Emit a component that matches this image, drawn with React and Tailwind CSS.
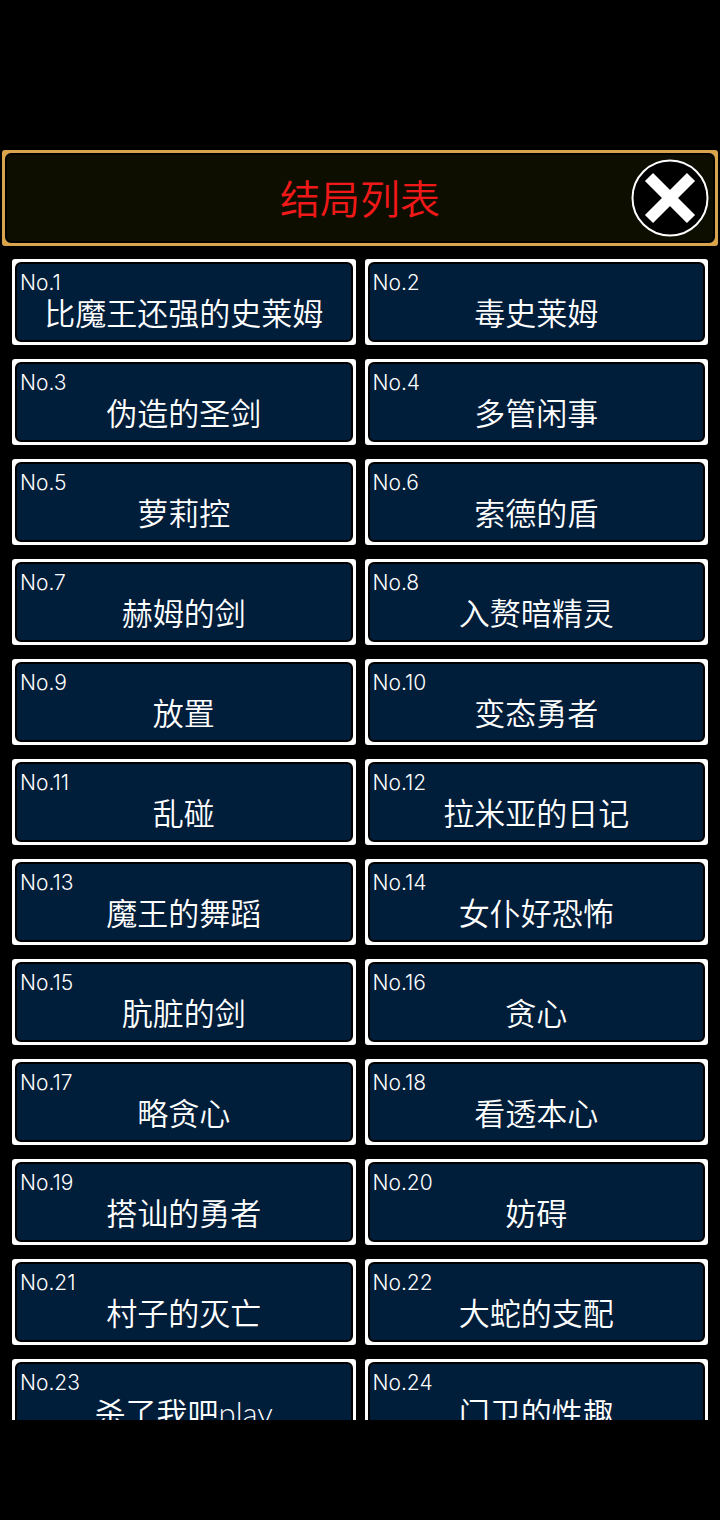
const ENDINGS = [
  "比魔王还强的史莱姆",
  "毒史莱姆",
  "伪造的圣剑",
  "多管闲事",
  "萝莉控",
  "索德的盾",
  "赫姆的剑",
  "入赘暗精灵",
  "放置",
  "变态勇者",
  "乱碰",
  "拉米亚的日记",
  "魔王的舞蹈",
  "女仆好恐怖",
  "肮脏的剑",
  "贪心",
  "略贪心",
  "看透本心",
  "搭讪的勇者",
  "妨碍",
  "村子的灭亡",
  "大蛇的支配",
  "杀了我吧play",
  "门卫的性趣",
];

function CloseIcon() {
  return (
    <svg className="h-full w-full" viewBox="0 0 78 78" fill="none" aria-hidden="true">
      <circle cx="39" cy="39" r="37.5" fill="#000" stroke="#fff" strokeWidth="2" />
      <path d="M18 18L60 60M60 18L18 60" stroke="#fff" strokeWidth="11.5" />
    </svg>
  );
}

function EndingCard({ number, title }) {
  return (
    <button type="button" className="block h-[86px] w-full cursor-pointer rounded-[3px] bg-white p-[3px]">
      <span className="flex h-full flex-col rounded-md border-2 border-black bg-[#001d3a] px-[3px]">
        <span className="pt-[3px] text-left font-['Inter',sans-serif] text-[21px] leading-8 font-light">No.{number}</span>
        <span className="text-center text-[31px] leading-7 whitespace-nowrap">{title}</span>
      </span>
    </button>
  );
}

export default function App() {
  return (
    <div className="flex h-screen flex-col bg-black pt-[150px] pb-[100px] font-['Lato','Noto_Sans_CJK_SC',sans-serif] font-[350] text-white">
      <header className="mx-0.5 h-24 shrink-0 rounded-[3px] bg-[#d8a54d] p-[3px]">
        <div className="grid h-full grid-cols-[1fr_auto_1fr] items-center rounded-md border-2 border-black bg-[#0e0e00] px-1">
          <h1 className="col-start-2 pt-0.5 text-[40px] leading-10 text-[#f01818]">结局列表</h1>
          <button type="button" aria-label="关闭" className="size-[78px] cursor-pointer justify-self-end rounded-full">
            <CloseIcon />
          </button>
        </div>
      </header>

      <main className="mt-[13px] min-h-0 flex-1 overflow-y-auto px-3 [scrollbar-width:none]">
        <ul className="grid grid-cols-2 gap-x-[9px] gap-y-[14px]">
          {ENDINGS.map((title, i) => (
            <li key={title}>
              <EndingCard number={i + 1} title={title} />
            </li>
          ))}
        </ul>
      </main>
    </div>
  );
}
